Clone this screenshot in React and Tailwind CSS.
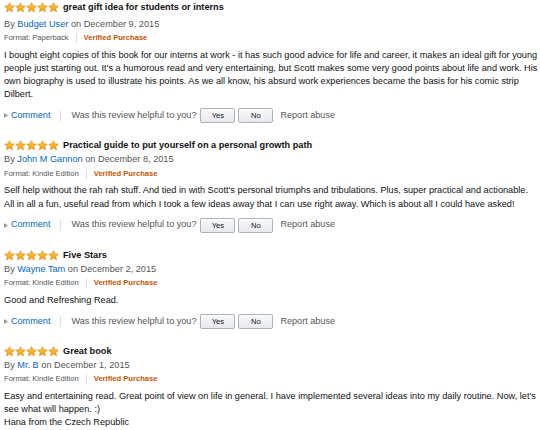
import React from "react";

const reviews = [
  {
    title: "great gift idea for students or interns",
    author: "Budget User",
    date: "December 9, 2015",
    format: "Paperback",
    body: [
      "I bought eight copies of this book for our interns at work - it has such good advice for life and career, it makes an ideal gift for young people just starting out. It's a humorous read and very entertaining, but Scott makes some very good points about life and work. His own biography is used to illustrate his points. As we all know, his absurd work experiences became the basis for his comic strip Dilbert.",
    ],
    actions: true,
  },
  {
    title: "Practical guide to put yourself on a personal growth path",
    author: "John M Gannon",
    date: "December 8, 2015",
    format: "Kindle Edition",
    body: [
      "Self help without the rah rah stuff. And tied in with Scott's personal triumphs and tribulations. Plus, super practical and actionable. All in all a fun, useful read from which I took a few ideas away that I can use right away. Which is about all I could have asked!",
    ],
    actions: true,
  },
  {
    title: "Five Stars",
    author: "Wayne Tam",
    date: "December 2, 2015",
    format: "Kindle Edition",
    body: ["Good and Refreshing Read."],
    actions: true,
  },
  {
    title: "Great book",
    author: "Mr. B",
    date: "December 1, 2015",
    format: "Kindle Edition",
    body: [
      "Easy and entertaining read. Great point of view on life in general. I have implemented several ideas into my daily routine. Now, let's see what will happen. :)",
      "Hana from the Czech Republic",
    ],
    actions: false,
  },
];

function Star({ id }) {
  return (
    <svg width="11" height="11" viewBox="0 0 24 24" className="block">
      <defs>
        <linearGradient id={id} x1="0" y1="0" x2="0" y2="1">
          <stop offset="0" stopColor="#ffd04a" />
          <stop offset="1" stopColor="#f59a0c" />
        </linearGradient>
      </defs>
      <polygon
        points="12,1.5 15.1,8.4 22.6,9.1 16.9,14.1 18.6,21.5 12,17.6 5.4,21.5 7.1,14.1 1.4,9.1 8.9,8.4"
        fill={`url(#${id})`}
        stroke="#d4820a"
        strokeWidth="1.3"
        strokeLinejoin="round"
      />
    </svg>
  );
}

function Stars({ idx }) {
  return (
    <div className="flex items-center gap-0">
      {[0, 1, 2, 3, 4].map((i) => (
        <Star key={i} id={`sg-${idx}-${i}`} />
      ))}
    </div>
  );
}

function Btn({ children }) {
  return (
    <button className="h-[15px] w-[35px] rounded-[2px] border border-[#adb1b8] bg-gradient-to-b from-[#f7f8fa] to-[#e7e9ec] text-[7.6px] leading-[13px] text-[#111] shadow-[0_1px_0_rgba(255,255,255,0.6)_inset]">
      {children}
    </button>
  );
}

function Review({ r, idx }) {
  return (
    <div className="flex flex-col">
      <div className="flex h-[15px] items-center gap-[4px]">
        <Stars idx={idx} />
        <span className="text-[9.2px] font-bold leading-[15px] text-[#111]">{r.title}</span>
      </div>
      <div className={`text-[9.2px] leading-[13.5px] text-[#555] ${idx === 0 ? "mt-[2.5px]" : ""}`}>
        By <span className="text-[#0066c0]">{r.author}</span> on {r.date}
      </div>
      <div className="flex h-[13.5px] items-center text-[7.6px] text-[#555]">
        <span>Format: {r.format}</span>
        <span className="mx-[7px] h-[10px] w-px bg-[#ddd]" />
        <span className="font-bold text-[#c45500]">Verified Purchase</span>
      </div>
      <div className="mt-[4px] text-[9.2px] leading-[13.2px] text-[#111]">
        {r.body.map((p, i) => (
          <div key={i}>{p}</div>
        ))}
      </div>
      {r.actions && (
        <div className="mt-[6.5px] flex h-[16px] items-center text-[9.1px]">
          <svg width="4" height="5" viewBox="0 0 4 5" className="mr-[3px]">
            <polygon points="0,0 4,2.5 0,5" fill="#999" />
          </svg>
          <span className="text-[#0066c0]">Comment</span>
          <span className="mx-[10px] h-[10px] w-px bg-[#ddd]" />
          <span className="text-[#555]">Was this review helpful to you?</span>
          <div className="ml-[4px] flex gap-[3px]">
            <Btn>Yes</Btn>
            <Btn>No</Btn>
          </div>
          <span className="ml-[7px] text-[#555]">Report abuse</span>
        </div>
      )}
    </div>
  );
}

export default function App() {
  return (
    <div
      className="h-[430px] w-[540px] overflow-hidden bg-white pl-[4px] pr-0"
      style={{ fontFamily: '"Liberation Sans", Arial, sans-serif' }}
    >
      <div className="flex flex-col gap-[14.5px]">
        {reviews.map((r, i) => (
          <Review key={i} r={r} idx={i} />
        ))}
      </div>
    </div>
  );
}
